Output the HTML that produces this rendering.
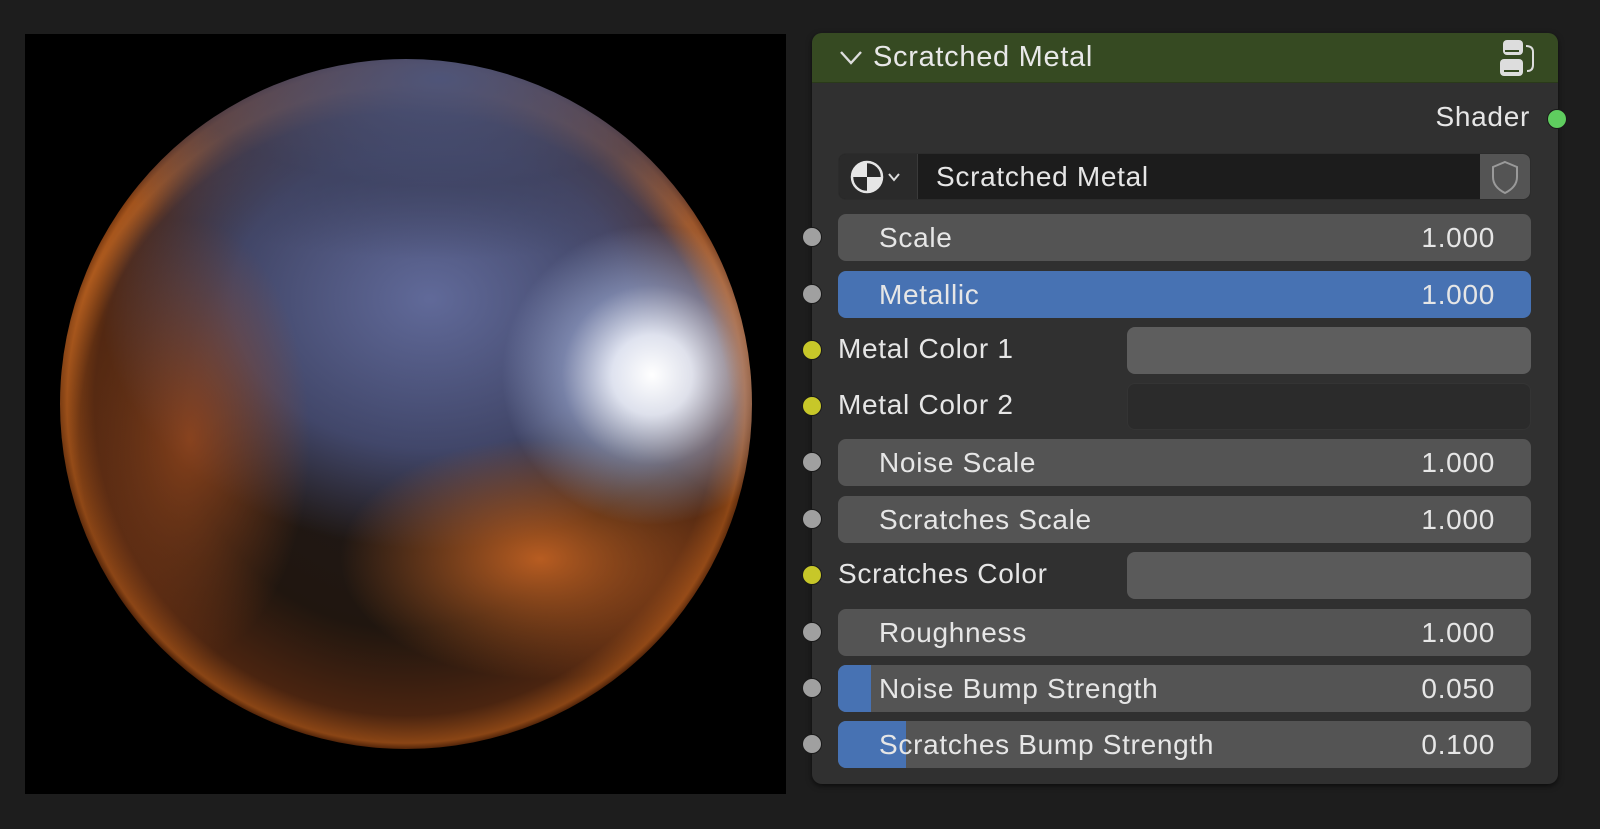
<!DOCTYPE html>
<html><head><meta charset="utf-8"><style>
*{margin:0;padding:0;box-sizing:border-box}
body{width:1600px;height:829px;background:#1d1d1d;position:relative;overflow:hidden;font-family:"Liberation Sans",sans-serif;color:#e6e6e6;letter-spacing:0.7px}
.vp{position:absolute;left:25px;top:34px;width:761px;height:760px;background:#000}
.sph{position:absolute;left:60px;top:59px;width:692px;height:690px;border-radius:50%;overflow:hidden;
background:
radial-gradient(ellipse 420px 180px at 380px 20px,rgba(75,85,125,.95),rgba(60,65,95,.6) 60%,rgba(50,55,80,0) 100%),
radial-gradient(circle 380px at 346px 380px,rgba(0,0,0,0) 0,rgba(0,0,0,0) 86%,rgba(215,115,40,.45) 93%,rgba(140,60,15,.5) 100%),
radial-gradient(circle at 592px 316px,rgba(255,255,255,1) 0,rgba(240,244,255,.9) 40px,rgba(170,185,225,.5) 90px,rgba(120,135,180,0) 150px),
radial-gradient(ellipse 200px 120px at 480px 500px,rgba(200,100,35,.9),rgba(150,70,25,0) 100%),
radial-gradient(ellipse 120px 220px at 130px 380px,rgba(160,75,30,.8),rgba(120,50,20,0) 100%),
radial-gradient(ellipse 330px 250px at 370px 240px,rgba(100,110,160,.95) 0,rgba(80,90,140,.7) 60%,rgba(40,45,70,0) 100%),
radial-gradient(circle 346px at 346px 345px,#1e1a1c 0,#20160f 65%,#4a2410 90%,#8a4515 98%,#4a2008 100%)}
.node{position:absolute;left:812px;top:33px;width:746px;height:751px;background:#303030;border-radius:10px;box-shadow:0 2px 6px rgba(0,0,0,.6)}
.hdr{position:absolute;left:0;top:0;width:746px;height:50px;background:#364a22;border-radius:10px 10px 0 0;border-bottom:1px solid #2a3a1a}
.hdr .t{position:absolute;left:61px;top:8px;font-size:29px;color:#e8e8e8}
.txt{position:absolute;font-size:28px;white-space:nowrap;color:#e6e6e6}
.sock{position:absolute;width:20px;height:20px;border-radius:50%;border:1px solid #1a1a1a}
.fld{position:absolute;left:26px;width:693px;height:47px;border-radius:8px;background:#545454;overflow:hidden}
.fld .l{position:absolute;left:41px;top:8px;font-size:28px}
.fld .v{position:absolute;right:36px;top:8px;font-size:28px}
.col{position:absolute;left:315px;width:404px;height:47px;border-radius:8px;background:#5a5a5a}
</style></head><body>
<div class="vp"></div>
<div class="sph"></div>
<div class="node">
 <div class="hdr">
  <svg style="position:absolute;left:26px;top:16px" width="26" height="18" viewBox="0 0 26 18"><path d="M3 3 L13 14 L23 3" stroke="#ddd" stroke-width="2.4" fill="none"/></svg>
  <div class="t">Scratched Metal</div>
  <svg style="position:absolute;left:686px;top:5px" width="40" height="42" viewBox="0 0 40 42"><rect x="5" y="2" width="20" height="15" rx="4" fill="#ddd"/><rect x="2" y="21" width="23" height="17" rx="4" fill="#ddd"/><rect x="7" y="12" width="14" height="2" fill="#364a22"/><rect x="6" y="32" width="15" height="2" fill="#364a22"/><path d="M28 8 Q35 8 35 14 V27 Q35 33 29 33" stroke="#ddd" stroke-width="2" fill="none"/></svg>
 </div>
 <div class="txt" style="right:28px;top:68px">Shader</div>
 <div class="sock" style="left:735px;top:76px;background:#5fcd5f"></div>
 <div style="position:absolute;left:26px;top:120px;width:693px;height:47px;border-radius:8px;background:#1c1c1c;border:1px solid #2c2c2c;overflow:hidden">
  <div style="position:absolute;left:0;top:0;width:79px;height:47px;background:#2a2a2a;border-right:1px solid #3a3a3a"></div>
  <svg style="position:absolute;left:10px;top:5px" width="60" height="36" viewBox="0 0 60 36"><circle cx="18" cy="18" r="15" fill="#2a2a2a" stroke="#e6e6e6" stroke-width="2.5"/><path d="M18 3 A15 15 0 0 0 3 18 L18 18Z" fill="#e6e6e6"/><path d="M18 18 L33 18 A15 15 0 0 1 18 33Z" fill="#e6e6e6"/><path d="M40 15 L45 21 L50 15" stroke="#ddd" stroke-width="2" fill="none"/></svg>
  <div style="position:absolute;left:97px;top:7px;font-size:28px">Scratched Metal</div>
  <div style="position:absolute;right:0;top:0;width:50px;height:47px;background:#545454"></div>
  <svg style="position:absolute;right:10px;top:5px" width="30" height="36" viewBox="0 0 30 36"><path d="M15 3 L27 8 V18 Q27 28 15 34 Q3 28 3 18 V8Z" stroke="#9a9a9a" stroke-width="2" fill="none"/></svg>
 </div>

 <div class="sock" style="left:-10px;top:194px;background:#a0a0a0"></div>
 <div class="fld" style="top:181px"><div class="l">Scale</div><div class="v">1.000</div></div>

 <div class="sock" style="left:-10px;top:251px;background:#a0a0a0"></div>
 <div class="fld" style="top:238px;background:#4772b3"><div class="l">Metallic</div><div class="v">1.000</div></div>

 <div class="sock" style="left:-10px;top:307px;background:#c7c729"></div>
 <div class="txt" style="left:26px;top:300px">Metal Color 1</div>
 <div class="col" style="top:294px;background:#5e5e5e"></div>

 <div class="sock" style="left:-10px;top:363px;background:#c7c729"></div>
 <div class="txt" style="left:26px;top:356px">Metal Color 2</div>
 <div class="col" style="top:350px;background:#2b2b2b;border:1px solid #343434"></div>

 <div class="sock" style="left:-10px;top:419px;background:#a0a0a0"></div>
 <div class="fld" style="top:406px"><div class="l">Noise Scale</div><div class="v">1.000</div></div>

 <div class="sock" style="left:-10px;top:476px;background:#a0a0a0"></div>
 <div class="fld" style="top:463px"><div class="l">Scratches Scale</div><div class="v">1.000</div></div>

 <div class="sock" style="left:-10px;top:532px;background:#c7c729"></div>
 <div class="txt" style="left:26px;top:525px">Scratches Color</div>
 <div class="col" style="top:519px"></div>

 <div class="sock" style="left:-10px;top:589px;background:#a0a0a0"></div>
 <div class="fld" style="top:576px"><div class="l">Roughness</div><div class="v">1.000</div></div>

 <div class="sock" style="left:-10px;top:645px;background:#a0a0a0"></div>
 <div class="fld" style="top:632px"><div style="position:absolute;left:0;top:0;width:33px;height:47px;background:#4772b3"></div><div class="l">Noise Bump Strength</div><div class="v">0.050</div></div>

 <div class="sock" style="left:-10px;top:701px;background:#a0a0a0"></div>
 <div class="fld" style="top:688px"><div style="position:absolute;left:0;top:0;width:68px;height:47px;background:#4772b3"></div><div class="l">Scratches Bump Strength</div><div class="v">0.100</div></div>
</div>
</body></html>
